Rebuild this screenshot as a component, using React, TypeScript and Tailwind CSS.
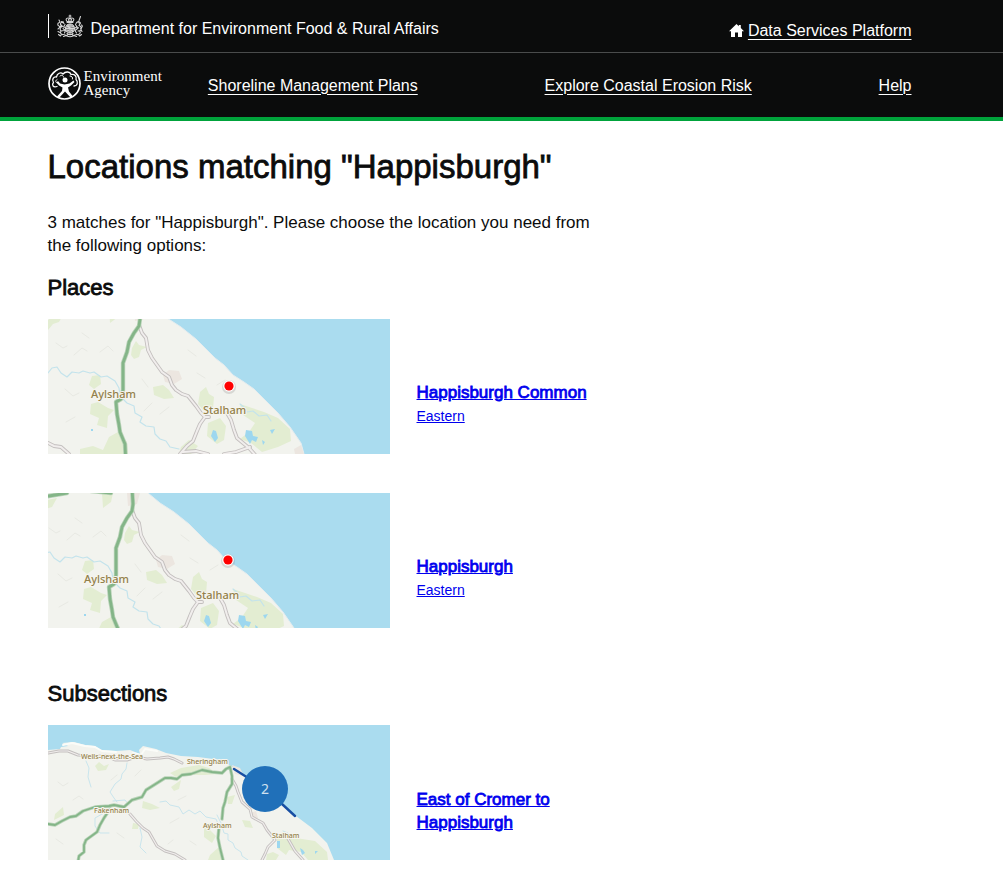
import type { ReactNode } from "react";

type Place = { name: string; region: string; map: ReactNode };

const land = "#f2f3ee";
const sea = "#aadcef";

function MapFrame({ label, children }: { label: string; children: ReactNode }) {
  return (
    <svg viewBox="0 0 342 135" role="img" aria-label={label} className="block w-full" strokeLinecap="round" strokeLinejoin="round" fill="none">
      <rect width="342" height="135" fill={sea} />
      {children}
    </svg>
  );
}

function MinorRoads({ d, width = 3.8 }: { d: string; width?: number }) {
  return (
    <>
      <path d={d} stroke="#c3bfbe" strokeWidth={width} />
      <path d={d} stroke="#f1eeed" strokeWidth={width - 1.8} />
    </>
  );
}

function MainRoads({ d, width = 3.6 }: { d: string; width?: number }) {
  return (
    <>
      <path d={d} stroke="#b9d3b8" strokeWidth={width + 0.8} />
      <path d={d} stroke="#84b588" strokeWidth={width - 0.8} />
    </>
  );
}

function TownLabel({ x, y, size, children }: { x: number; y: number; size: number; children: string }) {
  return (
    <text x={x} y={y} fontSize={size} fill="#92804a" stroke="#f6f5ee" strokeWidth="2" paintOrder="stroke" className="font-['Noto_Sans',sans-serif] font-medium">
      {children}
    </text>
  );
}

// The two place maps show the same stretch of coast, panned a little.
function CoastMap({ label, dx, dy, markerX, markerY }: { label: string; dx: number; dy: number; markerX: number; markerY: number }) {
  return (
    <MapFrame label={label}>
      <g transform={`translate(${dx} ${dy})`}>
        <path d="M-10-30H90L107-11 119-1 133 8 148 20 160 32 167 39 176 46 185 56 196 63 206 70 218 82 230 94 242 108 253 124 256 135 257 150H-10Z" fill={land} />
        <path d="M107-11 119-1 133 8 148 20 160 32 167 39 176 46 185 56 196 63 206 70 218 82 230 94 242 108 253 124 256 135" stroke="#e4ecef" strokeWidth="1" />
        <g fill="#e3edd2">
          <path d="M0 1 6-4 16-6 11 3 5 5 0 11ZM61-11H72L70-2 62 4ZM84 29 88 22 91 26 99 28 93 31 91 38 86 40 83 36ZM44 57 52 56 53 65 46 70 41 66ZM105 68 115 66 121 71 126 79 116 80 106 76ZM43 85 50 83 60 89 66 91 60 97 59 109 49 106 51 99 42 95ZM152 73 158 68 161 75 166 78 165 90 156 92 150 85Z" />
          <path d="M32 130 45 127 55 131 61 118 70 113 79 123 80 135H32ZM133 128 141 121 150 127 143 135H131ZM192 85 204 89 216 93 230 99 242 110 243 122 230 128 214 133 203 124 192 120 201 113 207 104 195 96ZM160 104 172 99 178 107 176 121 169 125 159 117Z" />
        </g>
        <path d="M115 56 121 51 131 52 134 60 126 65 117 63ZM86-11H99L96 0 87 2ZM246 130 253 126 256 135H247Z" fill="#ece6e0" />
        <g stroke="#e8e9e3" strokeWidth="1">
          <path d="M8 24l7 5 4-2M26 36l8-7 5 3M17 70l8 7 6-3M34 14l7 5M52 33l8-6 5 5M112 95l9-7M94 60l6 8M140 31l8 6M149 54l8 5M18 103l9-5M96 92l8-8M169 66l8-5" />
        </g>
        <g stroke="#c3e3ec" strokeWidth="1.2">
          <path d="M-6 52 0 54 4 49 9 48 13 54 19 58 24 53 31 54 35 52 42 54 46 53 53 58 59 57 67 62 71 69 72 77 79 84 86 87 87 94 94 98 92 103 98 107 106 108 107 115 112 120 118 122 122 128 131 130" />
          <path d="M192 85 197 89 199 93 205 92 211 97 219 96 223 102" />
        </g>
        <path d="M165 111l3 1 2 7-3 4-4-6ZM198 111l6 1 1 5 5 1-2 5-4-2-2 4-5-8ZM222 111l5-1-3 5ZM214 121l3 2-2 3ZM43 110h2v2h-2Z" fill="#9dd7ef" />
        <MinorRoads d="M91 6 94 14 98 19 100 31 104 39 109 46 114 53 121 58 124 66 128 71 134 75 140 77 148 87 153 94 157 98 152 105 149 112 145 122 139 127 132 135 128 147M161 98 157 98M179 94 183 101 186 111 189 119 195 124 201 129 209 138M202 128 188 133 176 135M135 133 148 132 160 135M-8 121 0 124 6 127 13 128 21 135" />
        <MainRoads d="M-8-5 8-8 26-11M50-13 70-11M91-16 92 0 91 7 86 14 81 23 79 33 75 44 75 58 75 71 73 80 68 83 69 95 71 106 72 113 77 125 78 147" />
        <TownLabel x={43} y={79} size={11}>Aylsham</TownLabel>
        <TownLabel x={155} y={95} size={11}>Stalham</TownLabel>
      </g>
      <circle cx={markerX} cy={markerY + 1} r="7" fill="#777" fillOpacity="0.22" />
      <circle cx={markerX} cy={markerY} r="5.8" fill="#fff" />
      <circle cx={markerX} cy={markerY} r="4.6" fill="#f00" />
    </MapFrame>
  );
}

function SubsectionMap() {
  return (
    <MapFrame label="Map of East of Cromer to Happisburgh">
      <path d="M0 25 12 24 13 22 20 21 14 18 26 17 37 20 47 21 53 25 68 26 82 25 92 29 91 25 95 21 108 24 118 28 133 31 150 32 173 35 183 41 197 50 214 62 230 76 248 91 264 103 279 118 286 135H0Z" fill={land} />
      <path d="M15 20 24 18 37 21 47 22 54 26 68 27M85 28 93 30 97 24 109 26" stroke="#fbfcf8" strokeWidth="2" />
      <path d="M47 41 51 37 56 41 61 39 58 45 50 46ZM122 48 133 43 151 40 161 43 170 49 157 50 147 50 136 49 128 52ZM123 62 133 55 131 64 126 66ZM7 89 15 82 16 90 6 95ZM95 76 104 79 112 83 102 85 94 83ZM85 98 91 99 90 104 84 104ZM156 98 163 98 162 105 168 111 164 118 156 112ZM179 72 187 70 184 79 180 79ZM194 95 202 96 205 103 197 102ZM162 130 171 122 175 135H160ZM229 112 236 106 244 112 254 114 267 116 279 127 280 135H260L253 127 241 125 238 130 229 123ZM219 129 225 127 231 130 228 135H218Z" fill="#e3edd2" />
      <path d="M184 40 192 43 196 51 187 49ZM202 88 208 86 210 93 203 93Z" fill="#ece6e0" />
      <path d="M10 57l5 4 5-3M25 75l6-4 4 3M87 51l6-6M8 114l7 5M69 108l7 5M122 98l9-5M130 75l8-4M142 116l6 4M63 55l6-5M120 119l5-4" stroke="#e8e9e3" />
      <path d="M38 36 41 43 40 52 43 62M79 38 78 44 74 49 73 54 67 59 62 67 66 73 69 77M56 88 47 93 47 101 52 108 61 108M92 103 94 112 92 122 98 128M112 77 118 76 122 80 131 82 135 89 141 85 147 89 152 86 158 92 168 94 171 101M169 90 173 98 176 108 180 109 180 115 185 118 187 123 193 127 194 131 200 135M65 76 77 75 81 80M235 106 240 108 244 113" stroke="#c9e5ed" />
      <path d="M229 116h3v7h-3ZM252 123l3 2 2 3-3 2ZM267 126h3l-3 3Z" fill="#9dd7ef" />
      <MinorRoads width={3} d="M0 28 11 26 20 26 30 30 45 31 58 31 67 35 79 35 88 32 99 34 112 33 120 32 126 34 134 38M82 89 88 96 95 103 101 107 105 114 109 121 117 126 127 129 137 135M184 54 188 61 190 67 194 77 202 84 204 92 215 98 219 105 227 115 220 122 217 129 214 135M239 112 243 119 247 126 255 135" />
      <MainRoads width={2.6} d="M0 99 7 100 14 96 22 92 28 91 35 86 47 82 61 81 66 80 76 82 84 75 94 72 98 65 106 60 117 53 123 53 129 54 134 50 143 49 154 45 164 47 174 48 178 44 182 42 184 51 184 59 179 67 177 77 175 83 174 94M62 84 56 93 52 100 49 107 38 115 36 120 36 127 31 131 30 137M171 102 170 113 172 123 175 135" />
      <TownLabel x={33} y={34} size={7}>Wells-next-the-Sea</TownLabel>
      <TownLabel x={139} y={39} size={7}>Sheringham</TownLabel>
      <TownLabel x={46} y={88} size={7}>Fakenham</TownLabel>
      <TownLabel x={155} y={103} size={7}>Aylsham</TownLabel>
      <TownLabel x={224} y={113} size={7}>Stalham</TownLabel>
      <path d="M186 44 197 51 217 64 234 79 247 91" stroke="#174ea3" strokeWidth="2.4" />
      <circle cx="217" cy="64" r="23" fill="#2070b9" />
      <text x="217" y="69" textAnchor="middle" fontSize="14" fill="#cfe0f0" className="font-['Noto_Sans',sans-serif]">2</text>
    </MapFrame>
  );
}

function Crest() {
  return (
    <svg viewBox="0 0 52 46" aria-hidden="true" className="h-6 w-[26px]" fill="none" stroke="#d6d6d6" strokeWidth="2.2" strokeLinecap="round" strokeLinejoin="round">
      <path d="M26 1v5M24 3h4M20 14c-5-6 2-9 6-5 4-4 11-1 6 5ZM20 16h12M23 10l1 3M29 10l-1 3" />
      <circle cx="26" cy="28" r="9" fill="#8a8a8a" />
      <path d="M26 19v18M17 28h18M20 23l3 2M29 23l4 1M20 33l3-1M29 32l3 2M22 21l2 5M30 30l1 4" />
      <path d="M14 18c-3-4-8-2-7 2l4 4c-5 1-6 6-3 9l6-1M8 33c-2 4-1 6 3 7M16 20l-3 5 4 1M12 28l5 4-2 5M5 16C0 17 1 22 4 23s0 5-2 6M4 11l2 4M9 14l4 1M2 34l4 2M9 22l-4 3" />
      <path d="M38 18c2-5 7-5 9-1l-3 5c5 2 6 6 3 10l-5 1M44 12l3-8M37 20l3 5-4 2M41 28l-5 4 3 5M49 21c3 2 1 5-1 6s1 5 2 7M45 33c3 3 1 6-3 7M42 16l3 1M39 24l4 3" />
      <path d="M8 41c5-2 8-1 12 2 4 2 8 2 12 0 4-3 8-4 12-2M13 44l8-3M31 41l8 3M20 38c4 3 8 3 12 0M3 40l4 3M49 40l-4 3" />
    </svg>
  );
}

function AgencyLogo() {
  return (
    <a href="#" className="flex items-center gap-[3px] pb-1 text-white no-underline">
      <svg viewBox="0 0 66 66" aria-hidden="true" className="h-[33px] w-[33px]" fill="none" stroke="white" strokeLinecap="round" strokeLinejoin="round">
        <circle cx="33" cy="33" r="31" strokeWidth="3.4" />
        <path d="M18 39C10 42 7 35 11 31 7 25 11 19 17 20 18 12 26 10 30 14 35 8 44 9 46 15 53 13 58 19 56 25 61 30 59 38 52 38" strokeWidth="2.6" />
        <path d="M18 25c-4 2-3 7 1 7M24 18c3-3 7-1 7 2M44 18c4 0 6 3 5 6" strokeWidth="2" />
        <circle cx="34" cy="26" r="5" fill="white" stroke="none" />
        <path d="M20 28 24 33 33 35 43 33 51 27 53 30 46 37 40 41 42 49 50 59 46 62 34 49 22 62 18 59 28 48 29 41 22 37 17 31Z" fill="white" stroke="none" />
      </svg>
      <span className="flex flex-col font-['Liberation_Serif',serif] text-[15px] leading-[14px]">
        <span>Environment</span>
        <span>Agency</span>
      </span>
    </a>
  );
}

const places: Place[] = [
  { name: "Happisburgh Common", region: "Eastern", map: <CoastMap label="Map of Happisburgh Common" dx={0} dy={0} markerX={181} markerY={67} /> },
  { name: "Happisburgh", region: "Eastern", map: <CoastMap label="Map of Happisburgh" dx={-7} dy={11} markerX={180} markerY={67} /> },
];

const headerLink = "underline underline-offset-[3px] decoration-1";
const strong = "font-normal [-webkit-text-stroke:0.8px_currentColor]";

function ResultRow({ map, children }: { map: ReactNode; children: ReactNode }) {
  return (
    <li className="grid grid-cols-[3fr_2fr] items-center gap-[27px]">
      <div>{map}</div>
      <div className="pt-9">{children}</div>
    </li>
  );
}

export default function App() {
  return (
    <div className="min-h-screen bg-white font-['Liberation_Sans',Arial,sans-serif] text-[17px] leading-[23px] text-[#0b0c0c]">
      <header className="border-b-4 border-[#00a33b] bg-[#0b0c0c] text-[16px] text-white">
        <div className="border-b border-[#4a4c4c]">
          <div className="mx-auto flex h-[52px] max-w-[960px] items-center justify-between pr-[70px] pl-[26px]">
            <div className="flex items-center">
              <div className="mr-2 flex h-6 items-center border-l border-white pl-2">
                <Crest />
              </div>
              <span className="pt-1">Department for Environment Food &amp; Rural Affairs</span>
            </div>
            <a href="#" className={`flex items-center gap-1 pt-2 ${headerLink}`}>
              <svg viewBox="0 0 15 13" aria-hidden="true" className="h-[13px] w-[15px]" fill="white">
                <path d="M7.5 0 9.8 2.2V1h2v3L15 7.3h-2V13H9V8.5H6V13H2V7.3H0Z" />
              </svg>
              <span>Data Services Platform</span>
            </a>
          </div>
        </div>
        <div className="mx-auto flex h-16 max-w-[960px] items-center gap-[46px] pr-[70px] pl-[26px]">
          <AgencyLogo />
          <nav className="flex flex-1 justify-between">
            <a href="#" className={headerLink}>Shoreline Management Plans</a>
            <a href="#" className={headerLink}>Explore Coastal Erosion Risk</a>
            <a href="#" className={headerLink}>Help</a>
          </nav>
        </div>
      </header>

      <main className="mx-auto max-w-[960px] px-[26px] pt-[26px] pb-8">
        <div className="max-w-[597px]">
          <h1 className={`text-[33px] leading-10 ${strong}`}>Locations matching &quot;Happisburgh&quot;</h1>
          <p className="mt-6 max-w-[560px]">3 matches for &quot;Happisburgh&quot;. Please choose the location you need from the following options:</p>

          <h2 className={`mt-[17px] text-[22px] leading-7 ${strong}`}>Places</h2>
          <ul className="mt-[17px] space-y-[39px]">
            {places.map((place) => (
              <ResultRow key={place.name} map={place.map}>
                <a href="#" className="block w-fit text-[#0000ee] underline">
                  <span className={strong}>{place.name}</span>
                </a>
                <a href="#" className="block w-fit text-sm leading-6 text-[#0000ee] underline">{place.region}</a>
              </ResultRow>
            ))}
          </ul>

          <h2 className={`mt-[52px] text-[22px] leading-7 ${strong}`}>Subsections</h2>
          <ul className="mt-[17px]">
            <ResultRow map={<SubsectionMap />}>
              <a href="#" className={`block max-w-[180px] text-[#0000ee] underline ${strong}`}>East of Cromer to Happisburgh</a>
            </ResultRow>
          </ul>
        </div>
      </main>
    </div>
  );
}
